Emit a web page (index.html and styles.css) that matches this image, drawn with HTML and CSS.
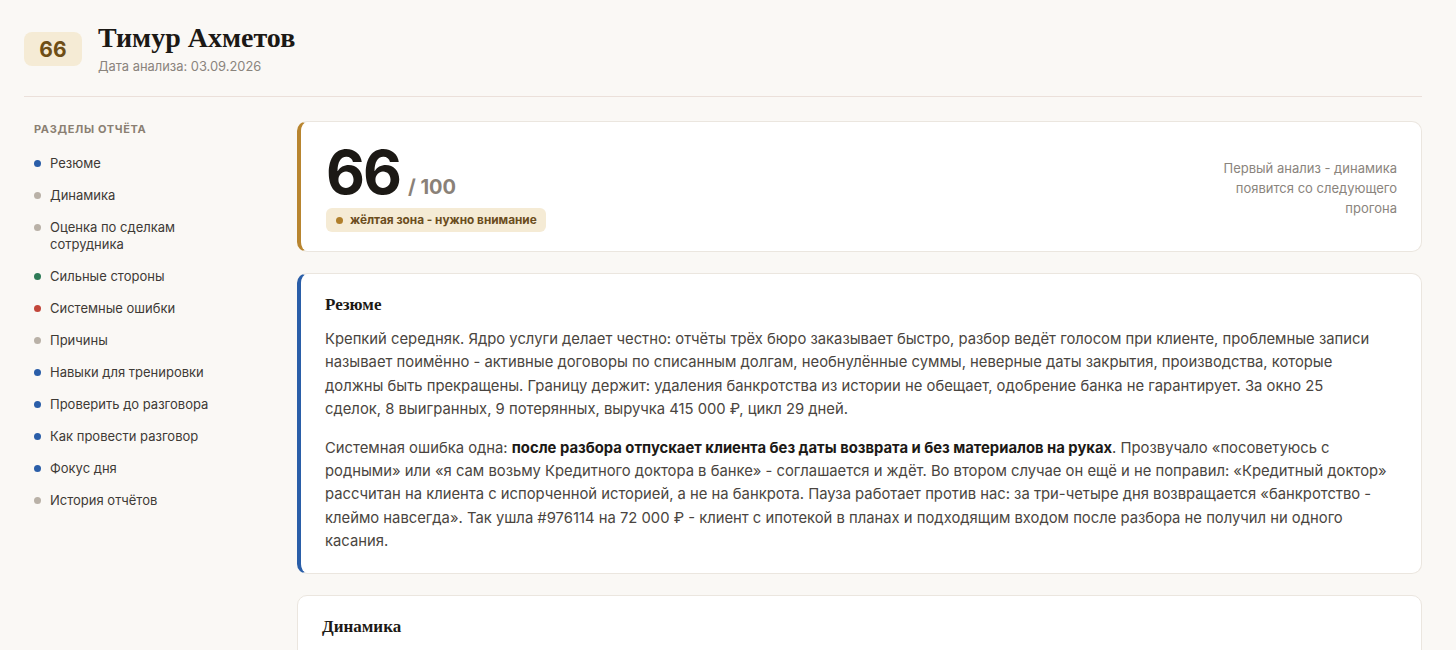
FILE: index.html
```html
<!DOCTYPE html>
<html lang="ru">
<head>
<meta charset="utf-8">
<title>Тимур Ахметов — отчёт</title>
<link rel="stylesheet" href="styles.css">
</head>
<body>
<div class="page">
  <header class="head">
    <div class="head-score">66</div>
    <div class="head-info">
      <h1 class="head-name">Тимур Ахметов</h1>
      <div class="head-date">Дата анализа: 03.09.2026</div>
    </div>
  </header>

  <div class="layout">
    <nav class="side">
      <div class="side-title">Разделы отчёта</div>
      <a class="side-item" href="#s-summary"><span class="dot dot-blue"></span><span>Резюме</span></a>
      <a class="side-item" href="#s-dyn"><span class="dot dot-gray"></span><span>Динамика</span></a>
      <a class="side-item" href="#s-deals"><span class="dot dot-gray"></span><span>Оценка по сделкам сотрудника</span></a>
      <a class="side-item" href="#s-strong"><span class="dot dot-green"></span><span>Сильные стороны</span></a>
      <a class="side-item" href="#s-errors"><span class="dot dot-red"></span><span>Системные ошибки</span></a>
      <a class="side-item" href="#s-causes"><span class="dot dot-gray"></span><span>Причины</span></a>
      <a class="side-item" href="#s-skills"><span class="dot dot-blue"></span><span>Навыки для тренировки</span></a>
      <a class="side-item" href="#s-check"><span class="dot dot-blue"></span><span>Проверить до разговора</span></a>
      <a class="side-item" href="#s-talk"><span class="dot dot-blue"></span><span>Как провести разговор</span></a>
      <a class="side-item" href="#s-focus"><span class="dot dot-blue"></span><span>Фокус дня</span></a>
      <a class="side-item" href="#s-history"><span class="dot dot-gray"></span><span>История отчётов</span></a>
    </nav>

    <main class="main">
      <section class="card card-gold score-card">
        <div class="score-left">
          <div class="score-line"><span class="score-num">66</span><span class="score-max">/ 100</span></div>
          <div class="zone"><span class="zone-dot"></span>жёлтая зона - нужно внимание</div>
        </div>
        <div class="score-note">Первый анализ - динамика появится со следующего прогона</div>
      </section>

      <section class="card card-blue" id="s-summary">
        <h2 class="card-title">Резюме</h2>
        <p class="text">Крепкий середняк. Ядро услуги делает честно: отчёты трёх бюро заказывает быстро, разбор ведёт голосом при клиенте, проблемные записи называет поимённо - активные договоры по списанным долгам, необнулённые суммы, неверные даты закрытия, производства, которые должны быть прекращены. Границу держит: удаления банкротства из истории не обещает, одобрение банка не гарантирует. За окно 25 сделок,&nbsp;8 выигранных, 9 потерянных, выручка 415 000 ₽, цикл 29 дней.</p>
        <p class="text">Системная ошибка одна: <b>после разбора отпускает клиента без даты возврата и без материалов на руках</b>. Прозвучало «посоветуюсь с родными» или «я сам возьму Кредитного доктора в банке» - соглашается и ждёт. Во втором случае он ещё и не поправил: «Кредитный доктор» рассчитан на клиента с испорченной историей, а не на банкрота. Пауза работает против нас: за три-четыре дня возвращается «банкротство - клеймо навсегда». Так ушла #976114 на 72 000 ₽ - клиент с ипотекой в планах и подходящим входом после разбора не получил ни одного касания.</p>
      </section>

      <section class="card" id="s-dyn">
        <h2 class="card-title">Динамика</h2>
        <p class="text">Первый анализ по сотруднику. Сравнение с прошлыми прогонами появится после следующего отчёта: будут видны изменения оценки, доли выигранных сделок и длины цикла.</p>
      </section>

      <section class="card" id="s-deals">
        <h2 class="card-title">Оценка по сделкам сотрудника</h2>
        <p class="text">Сделок в окне: 25. Выиграно: 8, проиграно: 9, в работе: 8. Средний чек выигранной сделки - 51 900 ₽. Средний цикл - 29 дней.</p>
        <p class="text">Лучше всего получаются сделки, где клиент пришёл с конкретной целью - ипотека или автокредит. Хуже - когда клиент пришёл «просто узнать», и разбор заканчивается без следующего шага.</p>
      </section>

      <section class="card card-green" id="s-strong">
        <h2 class="card-title">Сильные стороны</h2>
        <p class="text">Заказывает отчёты всех трёх бюро в первый же день, не откладывает разбор.</p>
        <p class="text">Разбор ведёт голосом при клиенте и называет проблемные записи поимённо: клиент понимает, что именно мешает.</p>
        <p class="text">Не обещает невозможного: удаление банкротства из истории и одобрение банка не гарантирует.</p>
      </section>

      <section class="card card-red" id="s-errors">
        <h2 class="card-title">Системные ошибки</h2>
        <p class="text">После разбора отпускает клиента без даты возврата и без материалов на руках. Возражения «посоветуюсь с родными» и «возьму продукт в банке» принимает без вопросов.</p>
        <p class="text">Не поправляет клиента, когда тот путает продукты: «Кредитный доктор» рассчитан на клиента с испорченной историей, а не на банкрота.</p>
      </section>

      <section class="card" id="s-causes">
        <h2 class="card-title">Причины</h2>
        <p class="text">Считает, что хороший разбор продаёт сам. Не видит, что за паузу в три-четыре дня у клиента возвращаются старые страхи, и решение откладывается.</p>
      </section>

      <section class="card card-blue" id="s-skills">
        <h2 class="card-title">Навыки для тренировки</h2>
        <p class="text">Закрытие разбора на конкретную дату следующего контакта. Отправка материалов клиенту сразу после звонка. Разведение продуктов, когда клиент сравнивает нас с банковскими предложениями.</p>
      </section>

      <section class="card card-blue" id="s-check">
        <h2 class="card-title">Проверить до разговора</h2>
        <p class="text">Открыть сделку #976114 и посмотреть, было ли хоть одно касание после разбора. Проверить, какие материалы уходят клиентам после звонка и уходят ли вообще.</p>
      </section>

      <section class="card card-blue" id="s-talk">
        <h2 class="card-title">Как провести разговор</h2>
        <p class="text">Начать с сильных сторон - разбор действительно сделан хорошо. Затем разобрать сделку #976114: что было после разбора и почему клиент ушёл. Договориться о правиле: ни один разбор не заканчивается без даты следующего контакта.</p>
      </section>

      <section class="card card-blue" id="s-focus">
        <h2 class="card-title">Фокус дня</h2>
        <p class="text">Каждый разбор сегодня заканчивается датой возврата и отправленными материалами.</p>
      </section>

      <section class="card" id="s-history">
        <h2 class="card-title">История отчётов</h2>
        <p class="text">03.09.2026 - 66 / 100, жёлтая зона.</p>
      </section>
    </main>
  </div>
</div>
</body>
</html>
```

FILE: styles.css
```css
html {
  scrollbar-color: #b6ada2 #faf8f5;
  scrollbar-width: thin;
}
* { box-sizing: border-box; }
body {
  margin: 0;
  background: #faf8f5;
  font-family: Inter, "Noto Sans", "Liberation Sans", sans-serif;
  color: #4a4540;
}
.page {
  padding: 0 34px 40px 24px;
}
.head {
  display: flex;
  align-items: center;
  gap: 16px;
  padding: 22px 0 20px;
  border-bottom: 1px solid #ebe0da;
}
.head-score {
  width: 58px;
  height: 34px;
  border-radius: 8px;
  background: #f5ebd5;
  color: #6e4e16;
  font-weight: 700;
  font-size: 21px;
  display: flex;
  align-items: center;
  justify-content: center;
}
.head-name {
  margin: 0;
  font-family: "Liberation Serif", "DejaVu Serif", serif;
  font-weight: 700;
  font-size: 28px;
  line-height: 32px;
  color: #1c1915;
}
.head-date {
  font-size: 12.9px;
  line-height: 18px;
  color: #8a847d;
  margin-top: 4px;
}
.layout {
  display: grid;
  grid-template-columns: 220px 1fr;
  gap: 53px;
  padding-top: 24px;
}
.side {
  display: flex;
  flex-direction: column;
}
.side-title {
  padding: 0 10px;
  font-size: 11px;
  line-height: 16px;
  font-weight: 700;
  letter-spacing: 0.06em;
  text-transform: uppercase;
  color: #8a7f72;
  margin-bottom: 11px;
}
.side-item {
  display: flex;
  align-items: flex-start;
  gap: 9px;
  padding: 7px 10px 8px;
  font-size: 13px;
  line-height: 17px;
  color: #3e3a35;
  text-decoration: none;
}
.dot {
  flex: none;
  width: 7px;
  height: 7px;
  border-radius: 50%;
  margin-top: 5px;
}
.dot-blue { background: #2a5ea8; }
.dot-gray { background: #b9b1a7; }
.dot-green { background: #2e7b57; }
.dot-red { background: #c2463a; }

.main {
  display: flex;
  flex-direction: column;
  gap: 21px;
  min-width: 0;
}
.card {
  background: #fff;
  border: 1px solid #ebe6df;
  border-radius: 10px;
  padding: 19px 28px 19px 24px;
}
.card-gold { border-left: 4px solid #b8852f; }
.card-blue { border-left: 4px solid #2a5ea8; }
.card-green { border-left: 4px solid #2e7b57; }
.card-red { border-left: 4px solid #c2463a; }

.score-card {
  display: flex;
  align-items: center;
  justify-content: space-between;
  padding: 21px 24px 19px 25px;
}
.score-line {
  display: flex;
  align-items: baseline;
  gap: 8px;
  height: 58px;
}
.score-num {
  font-size: 60px;
  line-height: 58px;
  font-weight: 700;
  letter-spacing: -2px;
  color: #1c1915;
}
.score-max {
  font-size: 20px;
  line-height: 24px;
  font-weight: 700;
  color: #8a8178;
}
.zone {
  display: inline-flex;
  align-items: center;
  gap: 7px;
  margin-top: 7px;
  height: 24px;
  padding: 0 9px 0 10px;
  border-radius: 6px;
  background: #f5ebd5;
  color: #6b4d1d;
  font-size: 11.8px;
  font-weight: 700;
}
.zone-dot {
  width: 7px;
  height: 7px;
  border-radius: 50%;
  background: #b07f2b;
}
.score-note {
  width: 190px;
  text-align: right;
  font-size: 13px;
  line-height: 20px;
  color: #8a847d;
}
.card-title {
  margin: 0 0 11px;
  font-family: "Liberation Serif", "DejaVu Serif", serif;
  font-weight: 700;
  font-size: 17px;
  line-height: 24px;
  color: #1c1915;
}
.text {
  margin: 0 0 15px;
  font-size: 14.8px;
  line-height: 23.4px;
  color: #4a4540;
}
.text:last-child { margin-bottom: 0; }
.text b { color: #1c1915; font-weight: 700; }
```
